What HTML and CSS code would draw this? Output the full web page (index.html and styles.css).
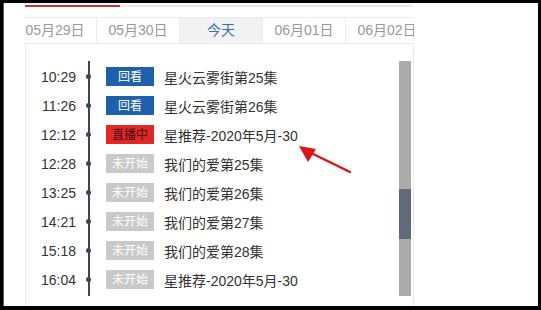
FILE: index.html
```html
<!DOCTYPE html>
<html lang="zh-CN">
<head>
<meta charset="UTF-8">
<meta name="viewport" content="width=device-width, initial-scale=1.0">
<title>节目单</title>
<link rel="stylesheet" href="styles.css">
</head>
<body>

<div class="frame">
  <div class="panel">
    <!-- progress bar on top -->
    <div class="topbar"><div class="topbar-fill"></div></div>

    <!-- date tabs -->
    <div class="tabs">
      <div class="tabs-track">
        <div class="tab">05月29日</div>
        <div class="tab">05月30日</div>
        <div class="tab active">今天</div>
        <div class="tab">06月01日</div>
        <div class="tab">06月02日</div>
      </div>
    </div>

    <!-- program list -->
    <div class="list">
      <div class="timeline">
        <div class="row"><span class="time">10:29</span><span class="dot"></span><span class="badge replay">回看</span><span class="title">星火云雾街第25集</span></div>
        <div class="row"><span class="time">11:26</span><span class="dot"></span><span class="badge replay">回看</span><span class="title">星火云雾街第26集</span></div>
        <div class="row"><span class="time">12:12</span><span class="dot"></span><span class="badge live">直播中</span><span class="title">星推荐-2020年5月-30</span></div>
        <div class="row"><span class="time">12:28</span><span class="dot"></span><span class="badge wait">未开始</span><span class="title">我们的爱第25集</span></div>
        <div class="row"><span class="time">13:25</span><span class="dot"></span><span class="badge wait">未开始</span><span class="title">我们的爱第26集</span></div>
        <div class="row"><span class="time">14:21</span><span class="dot"></span><span class="badge wait">未开始</span><span class="title">我们的爱第27集</span></div>
        <div class="row"><span class="time">15:18</span><span class="dot"></span><span class="badge wait">未开始</span><span class="title">我们的爱第28集</span></div>
        <div class="row"><span class="time">16:04</span><span class="dot"></span><span class="badge wait">未开始</span><span class="title">星推荐-2020年5月-30</span></div>
      </div>
      <div class="scrollbar"><div class="thumb"></div></div>
    </div>
  </div>

  <!-- annotation arrow -->
  <svg class="arrow" width="60" height="40" viewBox="0 0 60 40">
    <line x1="55" y1="29" x2="12" y2="8" stroke="#e01414" stroke-width="2.5" stroke-linecap="round"/>
    <polygon points="4,3 21,6 13,19" fill="#e01414"/>
  </svg>
</div>

</body>
</html>
```

FILE: styles.css
```css
body {
  margin: 0;
  padding: 0;
  background: #000;
  font-family: "Liberation Sans", "Noto Sans CJK SC", sans-serif;
}
.frame {
  position: relative;
  width: 535px;
  height: 303px;
  margin: 3px 3px 4px 3px;
  background: #fff;
  border-left: 1px solid #4f6a4f;
  box-sizing: border-box;
  overflow: hidden;
}
.panel {
  margin-left: 21px;
  width: 389px;
}
.topbar {
  margin-top: 2px;
  height: 2px;
  width: 388px;
  background: #e8e8e8;
}
.topbar-fill {
  width: 95px;
  height: 2px;
  background: #c23531;
}
.tabs {
  margin-top: 10px;
  height: 25px;
  border-top: 1px solid #ececec;
  border-bottom: 1px solid #ececec;
  overflow: hidden;
}
.tabs-track {
  display: flex;
  margin-left: -11px;
}
.tab {
  flex: 0 0 83px;
  box-sizing: border-box;
  height: 25px;
  line-height: 25px;
  text-align: center;
  font-size: 14px;
  color: #999;
  border-right: 1px solid #ececec;
}
.tab.active {
  background: #f2f2f2;
  color: #3b6cb3;
}
.list {
  display: flex;
  align-items: flex-start;
  height: 262px;
  padding-top: 17px;
  box-sizing: border-box;
  border-left: 1px solid #ececec;
  border-right: 1px solid #ececec;
}
.timeline {
  flex: 1;
  padding: 1px 0 2px;
  background: linear-gradient(#3b4756, #3b4756) no-repeat 62px 0 / 2px 100%;
}
.row {
  display: flex;
  align-items: center;
  height: 29px;
}
.time {
  width: 50px;
  text-align: right;
  font-size: 14px;
  color: #333;
}
.dot {
  width: 5px;
  height: 5px;
  border-radius: 50%;
  background: #3b4756;
  margin: 0 15px 0 10px;
}
.badge {
  width: 48px;
  height: 19px;
  line-height: 20px;
  text-align: center;
  font-size: 12px;
  margin-right: 10px;
}
.badge.replay {
  background: #1f60ad;
  color: #fff;
}
.badge.live {
  background: #e32727;
  color: #3a1212;
}
.badge.wait {
  background: #c9c9c9;
  color: #fff;
}
.title {
  font-size: 14px;
  color: #333;
}
.scrollbar {
  width: 12px;
  height: 235px;
  margin-right: 2px;
  background: #acacac;
  display: flex;
  flex-direction: column;
}
.thumb {
  margin-top: 128px;
  height: 50px;
  background: #5f6b79;
}
.arrow {
  position: absolute;
  left: 291px;
  top: 140px;
}
```
